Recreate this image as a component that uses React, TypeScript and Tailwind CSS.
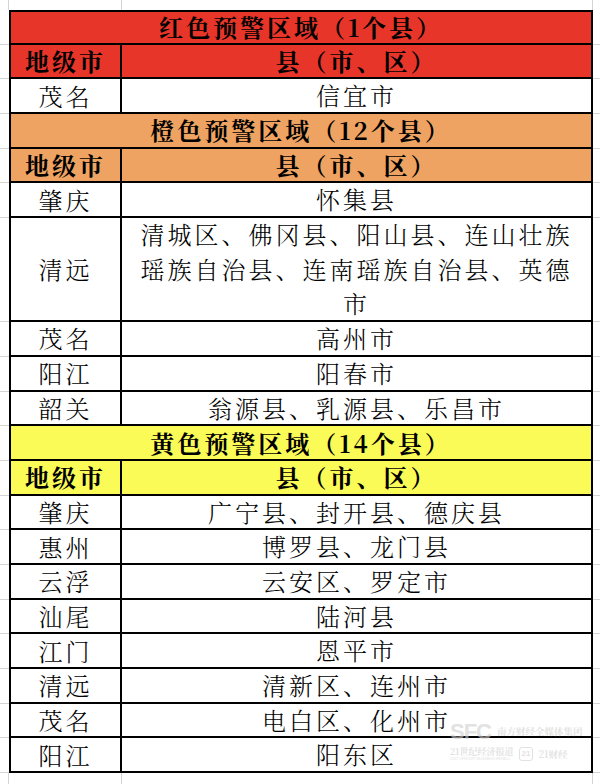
import React from 'react';

type Row =
  | { kind: 'title'; text: string; bg: string }
  | { kind: 'head'; bg: string }
  | { kind: 'data'; city: string; county: string; lines?: number };

const RED = 'bg-[#e8352a]';
const ORANGE = 'bg-[#eea362]';
const YELLOW = 'bg-[#fbfb58]';

const ROWS: Row[] = [
  { kind: 'title', text: '红色预警区域（1个县）', bg: RED },
  { kind: 'head', bg: RED },
  { kind: 'data', city: '茂名', county: '信宜市' },
  { kind: 'title', text: '橙色预警区域（12个县）', bg: ORANGE },
  { kind: 'head', bg: ORANGE },
  { kind: 'data', city: '肇庆', county: '怀集县' },
  {
    kind: 'data',
    city: '清远',
    county: '清城区、佛冈县、阳山县、连山壮族瑶族自治县、连南瑶族自治县、英德市',
    lines: 3,
  },
  { kind: 'data', city: '茂名', county: '高州市' },
  { kind: 'data', city: '阳江', county: '阳春市' },
  { kind: 'data', city: '韶关', county: '翁源县、乳源县、乐昌市' },
  { kind: 'title', text: '黄色预警区域（14个县）', bg: YELLOW },
  { kind: 'head', bg: YELLOW },
  { kind: 'data', city: '肇庆', county: '广宁县、封开县、德庆县' },
  { kind: 'data', city: '惠州', county: '博罗县、龙门县' },
  { kind: 'data', city: '云浮', county: '云安区、罗定市' },
  { kind: 'data', city: '汕尾', county: '陆河县' },
  { kind: 'data', city: '江门', county: '恩平市' },
  { kind: 'data', city: '清远', county: '清新区、连州市' },
  { kind: 'data', city: '茂名', county: '电白区、化州市' },
  { kind: 'data', city: '阳江', county: '阳东区' },
];

const FONT = { fontFamily: '"Noto Serif CJK SC", "Noto Sans CJK SC", serif' };
const LATIN = { fontFamily: '"Liberation Sans", sans-serif' };

function Gutter({ h }: { h: string }) {
  return <div className={`${h} border-b border-[#d4d4d4]`} />;
}

export default function App() {
  return (
    <div className="relative w-[600px] h-[784px] bg-white overflow-hidden text-black" style={FONT}>
      <div className="grid grid-cols-[9px_113px_471px_7px]">
        {/* spreadsheet strip above the table */}
        <div className="h-[10px] border-r border-[#d4d4d4]" />
        <div className="h-[10px] border-r border-[#d4d4d4]" />
        <div className="h-[10px] border-r border-[#d4d4d4]" />
        <div className="h-[10px]" />

        {ROWS.map((r, i) => {
          const top = i === 0 ? 'border-t-2' : '';
          if (r.kind === 'title') {
            return (
              <React.Fragment key={i}>
                <Gutter h="h-[34.7px]" />
                <div
                  className={`col-span-2 h-[34.7px] ${r.bg} ${top} border-l-2 border-r-2 border-b-2 border-black flex items-center justify-center text-[24px] font-bold tracking-[3px] leading-none`}
                >
                  {r.text}
                </div>
                <Gutter h="h-[34.7px]" />
              </React.Fragment>
            );
          }
          if (r.kind === 'head') {
            return (
              <React.Fragment key={i}>
                <Gutter h="h-[34.7px]" />
                <div
                  className={`h-[34.7px] ${r.bg} border-l-2 border-r-2 border-b-2 border-black flex items-center justify-center text-[24px] font-bold tracking-[3px] leading-none`}
                >
                  地级市
                </div>
                <div
                  className={`h-[34.7px] ${r.bg} border-r-2 border-b-2 border-black flex items-center justify-center text-[24px] font-bold tracking-[3px] leading-none`}
                >
                  县（市、区）
                </div>
                <Gutter h="h-[34.7px]" />
              </React.Fragment>
            );
          }
          const h = r.lines === 3 ? 'h-[104px]' : 'h-[34.7px]';
          return (
            <React.Fragment key={i}>
              <Gutter h={h} />
              <div
                className={`${h} bg-white border-l-2 border-r-2 border-b-2 border-black flex items-center justify-center text-[24px] font-light tracking-[3px] leading-none`}
              >
                {r.city}
              </div>
              <div
                className={`${h} bg-white border-r-2 border-b-2 border-black flex items-center justify-center px-[8px] text-center text-[24px] font-light tracking-[3px] leading-[34.7px]`}
              >
                {r.county}
              </div>
              <Gutter h={h} />
            </React.Fragment>
          );
        })}

        {/* strip below the table */}
        <div className="h-[20px] border-r border-[#d4d4d4]" />
        <div className="h-[20px] border-r border-[#d4d4d4]" />
        <div className="h-[20px] border-r border-[#d4d4d4]" />
        <div className="h-[20px]" />
      </div>

      {/* watermark */}
      <div className="absolute left-[450px] top-[721px] flex flex-col gap-[4px] text-[#cfcfcf] opacity-60 pointer-events-none">
        <div className="flex items-center gap-[6px]">
          <span className="text-[22px] font-bold leading-none tracking-[-1px]" style={LATIN}>
            SFC
          </span>
          <span className="text-[9.5px] leading-none font-bold whitespace-nowrap">南方财经全媒体集团</span>
        </div>
        <div className="flex items-center gap-[5px]">
          <div className="flex flex-col">
            <span className="text-[9px] leading-none font-bold whitespace-nowrap">21世纪经济报道</span>
            <span className="text-[3.5px] leading-none mt-[2px] whitespace-nowrap" style={LATIN}>
              21ST CENTURY BUSINESS HERALD
            </span>
          </div>
          <span className="border border-[#cfcfcf] rounded-[3px] text-[8px] leading-none px-[2px] py-[2px] font-bold" style={LATIN}>
            21
          </span>
          <span className="text-[9.5px] leading-none font-bold whitespace-nowrap">21财经</span>
        </div>
      </div>
    </div>
  );
}
